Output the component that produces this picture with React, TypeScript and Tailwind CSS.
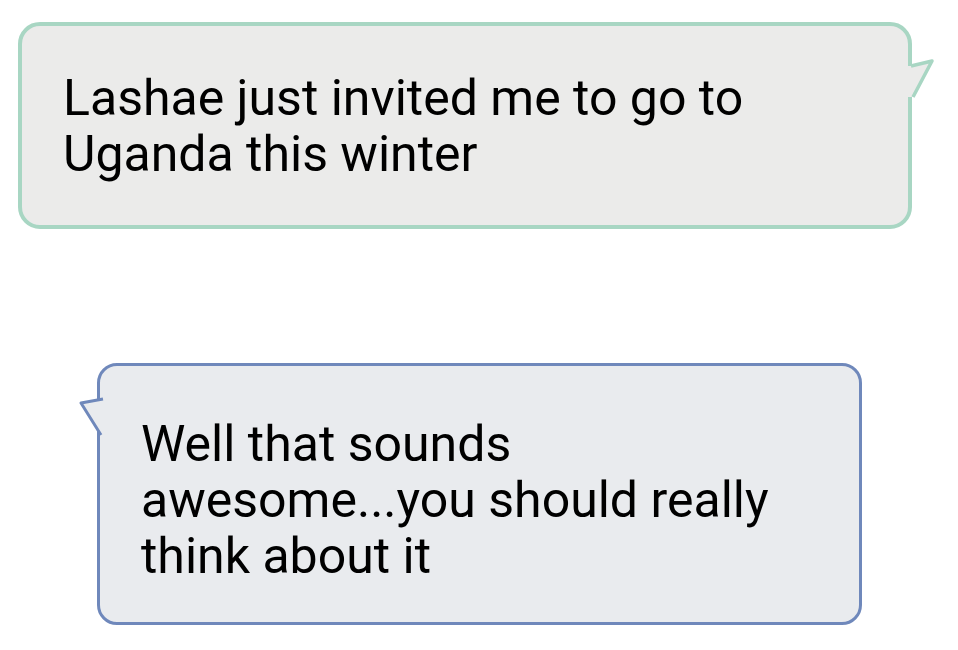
import React from "react";

export default function App() {
  return (
    <div className="w-[958px] h-[650px] bg-white overflow-hidden" style={{ fontFamily: "Roboto, 'Noto Sans', sans-serif" }}>
      <div className="flex flex-col pt-[22px]">
        <div className="relative ml-[18px] w-[894px] h-[207px] rounded-[22px] border-4 border-[#a8d6c3] bg-[#ebebea] pl-[41px] pt-[44px]">
          <p className="text-[50px] leading-[56px] text-black">
            Lashae just invited me to go to
            <br />
            Uganda this winter
          </p>
          <svg className="absolute left-[886px] top-[32px]" width="30" height="44" viewBox="0 0 30 44">
            <polygon points="0,8 4,8 24,3 6,39 0,39" fill="#ebebea" />
            <path d="M3,8 L24,3 L5,39" fill="none" stroke="#a8d6c3" strokeWidth="3.5" strokeLinejoin="round" />
          </svg>
        </div>
        <div className="relative ml-[97px] mt-[134px] w-[765px] h-[262px] rounded-[20px] border-[3px] border-[#6f88bb] bg-[#e9ebee] pl-[41px] pt-[50px]">
          <p className="text-[50px] leading-[56px] text-black">
            Well that sounds
            <br />
            awesome...you should really
            <br />
            think about it
          </p>
          <svg className="absolute left-[-24px] top-[30px]" width="30" height="45" viewBox="0 0 30 45">
            <polygon points="30,3 26,3 5,7 25,39 30,39" fill="#e9ebee" />
            <path d="M27,3 L5,7 L25,39" fill="none" stroke="#6f88bb" strokeWidth="3" strokeLinejoin="round" />
          </svg>
        </div>
      </div>
    </div>
  );
}
